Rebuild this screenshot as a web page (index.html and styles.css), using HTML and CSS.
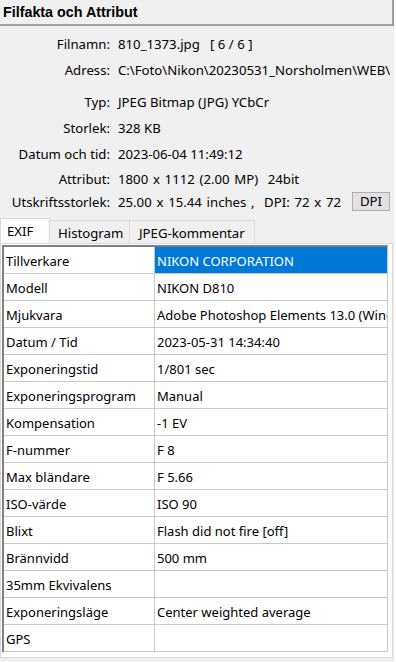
FILE: index.html
```html
<!DOCTYPE html>
<html>
<head>
<meta charset="utf-8">
<link rel="stylesheet" href="styles.css">
</head>
<body>
<div class="app">
  <div class="title">Filfakta och Attribut</div>
  <div class="info">
    <div class="row"><span class="lbl">Filnamn:</span><span class="val">810_1373.jpg &nbsp;&nbsp;[ 6 / 6 ]</span></div>
    <div class="row"><span class="lbl">Adress:</span><span class="val">C:\Foto\Nikon\20230531_Norsholmen\WEB\</span></div>
    <div class="row gap"><span class="lbl">Typ:</span><span class="val">JPEG Bitmap (JPG) YCbCr</span></div>
    <div class="row"><span class="lbl">Storlek:</span><span class="val">328 KB</span></div>
    <div class="row"><span class="lbl">Datum och tid:</span><span class="val">2023-06-04 11:49:12</span></div>
    <div class="row r2"><span class="lbl">Attribut:</span><span class="val wide">1800 x 1112 (2.00 MP) &nbsp;24bit</span></div>
    <div class="row r2"><span class="lbl">Utskriftsstorlek:</span><span class="val wide">25.00 x 15.44 inches ,&nbsp; DPI: 72 x 72</span><span class="btn">DPI</span></div>
  </div>
  <div class="tabs">
    <div class="tab active">EXIF</div>
    <div class="tab t2">Histogram</div>
    <div class="tab t3">JPEG-kommentar</div>
  </div>
  <div class="page">
    <div class="grid">
      <div class="c k">Tillverkare</div><div class="c v sel">NIKON CORPORATION</div>
      <div class="c k">Modell</div><div class="c v">NIKON D810</div>
      <div class="c k">Mjukvara</div><div class="c v">Adobe Photoshop Elements 13.0 (Windows)</div>
      <div class="c k">Datum / Tid</div><div class="c v">2023-05-31 14:34:40</div>
      <div class="c k">Exponeringstid</div><div class="c v">1/801 sec</div>
      <div class="c k">Exponeringsprogram</div><div class="c v">Manual</div>
      <div class="c k">Kompensation</div><div class="c v">-1 EV</div>
      <div class="c k">F-nummer</div><div class="c v">F 8</div>
      <div class="c k">Max bländare</div><div class="c v">F 5.66</div>
      <div class="c k">ISO-värde</div><div class="c v">ISO 90</div>
      <div class="c k">Blixt</div><div class="c v">Flash did not fire [off]</div>
      <div class="c k">Brännvidd</div><div class="c v">500 mm</div>
      <div class="c k">35mm Ekvivalens</div><div class="c v"></div>
      <div class="c k">Exponeringsläge</div><div class="c v">Center weighted average</div>
      <div class="c k">GPS</div><div class="c v"></div>
    </div>
  </div>
</div>
</body>
</html>
```
FILE: styles.css
```css
* { box-sizing: border-box; }
html, body { margin: 0; padding: 0; background: #f0f0f0; }
body { width: 396px; height: 662px; overflow: hidden; font-family: "Noto Sans", "Open Sans", sans-serif; font-size: 13.2px; color: #000; }
.app { width: 396px; height: 662px; border-right: 2px solid #fbfbfb; display: flex; flex-direction: column; }
.title { flex: none; height: 26px; border-right: 2px solid #a0a0a0; border-bottom: 2px solid #a0a0a0; width: 394px; font-family: "Liberation Sans", Arial, sans-serif; font-weight: bold; font-size: 14.3px; padding: 4px 0 0 3px; }
.info { padding-top: 5px; }
.row { display: flex; align-items: center; height: 26px; white-space: nowrap; }
.row.gap { margin-top: 6px; }
.row.r2 { height: 23px; }
.lbl { width: 111px; text-align: right; padding-right: 1px; flex: none; }
.val { padding-left: 7px; overflow: hidden; }
.val.wide { word-spacing: 1.3px; }
.btn { margin-left: 11px; width: 38px; height: 19px; background: #e1e1e1; border: 1px solid #adadad; text-align: center; line-height: 16px; }
.tabs { flex: none; display: flex; margin-top: 5px; height: 25px; align-items: flex-end; }
.tab { height: 23px; padding: 3px 0 0 9px; border: 1px solid #d9d9d9; border-bottom: none; margin-left: -1px; background: #f0f0f0; }
.tab.active { margin-left: 0; width: 50px; height: 25px; background: #fff; padding: 3px 0 0 6px; z-index: 1; }
.t2 { width: 81px; padding-left: 8px; }
.t3 { width: 126px; padding-left: 9px; }
.page { flex: none; width: 393px; height: 415px; background: #fff; border: 1px solid #d9d9d9; padding: 1px 4px 0 1px; font-size: 13px; }
.grid { display: grid; grid-template-columns: 151px 232px; border-left: 2px solid #808080; border-top: 2px solid #808080; border-right: 1px solid #c8c8c8; width: 386px; }
.c { height: 27px; border-right: 1px solid #c8c8c8; border-bottom: 1px solid #c8c8c8; padding: 5px 0 0 2px; white-space: nowrap; overflow: hidden; background: #fff; }
.v { padding-left: 2px; border-right: none; }
.sel { background: #0078d7; color: #fff; }
```
